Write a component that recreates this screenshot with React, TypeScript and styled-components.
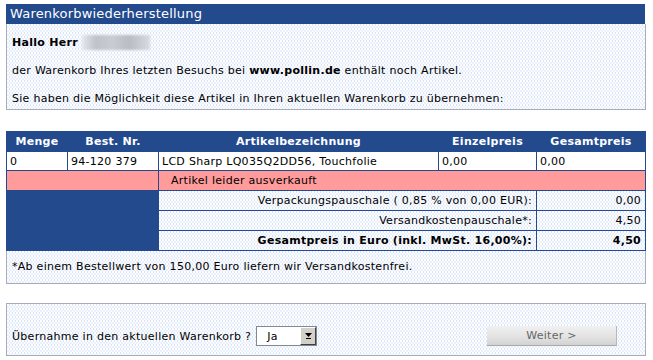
import React from "react";
import styled, { createGlobalStyle, css } from "styled-components";

const GlobalStyle = createGlobalStyle`
  html, body { margin: 0; padding: 0; background: #ffffff; }
  body {
    font-family: "DejaVu Sans", Verdana, sans-serif;
    font-size: 11px;
    letter-spacing: 0.28px;
    color: #000000;
  }
`;

const BLUE = "#224a8d";
const PANEL_BORDER = "#a6adb8";

const dotted = css`
  background-color: #d6e3fa;
  background-image: radial-gradient(circle at 1px 1px, #ffffff 0.7px, transparent 1px),
    radial-gradient(circle at 1px 1px, #ffffff 0.7px, transparent 1px);
  background-size: 3px 4px, 3px 4px;
  background-position: 0 0, 1.5px 2px;
`;

const Page = styled.div`
  width: 640px;
  padding: 4px 0 0 6px;
`;

const TitleBar = styled.div`
  height: 20px;
  line-height: 20px;
  background: ${BLUE};
  color: #ffffff;
  font-size: 13px;
  letter-spacing: 0.2px;
  padding-left: 4px;
  width: 635px;
`;

const InfoPanel = styled.div`
  ${dotted};
  width: 627px;
  border: 1px solid ${PANEL_BORDER};
  border-top: none;
  padding: 11px 6px 3px 5px;
`;

const Para = styled.p<{ $last?: boolean }>`
  margin: 0 0 ${(p) => (p.$last ? 0 : 14)}px 0;
  line-height: 14px;
  white-space: nowrap;
`;

const Greeting = styled(Para)`
  font-weight: bold;
  display: flex;
  align-items: center;
  gap: 4px;
`;

const BlurName = styled.span`
  display: inline-block;
  width: 68px;
  height: 15px;
  background: linear-gradient(90deg, #e4e8ee 0%, #bfc3c9 20%, #c9ccd2 45%, #b8bcc3 70%, #d8dce2 100%);
  filter: blur(1px);
`;

const Strong = styled.b`
  font-weight: bold;
`;

const CartTable = styled.table`
  margin-top: 21px;
  width: 640px;
  table-layout: fixed;
  border-collapse: separate;
  border-spacing: 1px;
  background: ${BLUE};
`;

const HeadCell = styled.th`
  height: 19px;
  padding: 0;
  color: #ffffff;
  font-weight: bold;
  text-align: center;
  white-space: nowrap;
`;

const Cell = styled.td<{ $tone?: "white" | "pink" | "dotted" | "blue"; $align?: "left" | "right"; $bold?: boolean; $indent?: number }>`
  height: ${(p) => (p.$tone === "white" ? 18 : 19)}px;
  padding: 0 ${(p) => (p.$align === "right" ? 4 : 0)}px 0 ${(p) => p.$indent ?? 3}px;
  text-align: ${(p) => p.$align ?? "left"};
  font-weight: ${(p) => (p.$bold ? "bold" : "normal")};
  white-space: nowrap;
  ${(p) =>
    p.$tone === "pink"
      ? css`background: #ff9b9b;`
      : p.$tone === "dotted"
      ? dotted
      : p.$tone === "blue"
      ? css`background: ${BLUE};`
      : css`background: #ffffff;`}
`;

const FootPanel = styled.div`
  ${dotted};
  width: 633px;
  height: 32px;
  line-height: 32px;
  border: 1px solid ${PANEL_BORDER};
  border-top: none;
  padding-left: 5px;
`;

const BottomPanel = styled.div`
  ${dotted};
  margin-top: 19px;
  box-sizing: border-box;
  width: 640px;
  height: 53px;
  border: 1px solid ${PANEL_BORDER};
  padding: 21px 0 8px 5px;
  display: flex;
  align-items: center;
`;

const Label = styled.span`
  white-space: nowrap;
`;

const SelectBox = styled.div`
  margin-left: 5px;
  width: 61px;
  height: 20px;
  background: #ffffff;
  border: 1px solid #7f8a99;
  display: flex;
  align-items: center;
  justify-content: space-between;
  padding-left: 10px;
  box-sizing: border-box;
`;

const SelectArrow = styled.span`
  width: 16px;
  height: 18px;
  background: #d4d0c8;
  border-left: 1px solid #ffffff;
  border-top: 1px solid #ffffff;
  border-right: 1px solid #404040;
  border-bottom: 1px solid #404040;
  box-sizing: border-box;
  display: flex;
  align-items: center;
  justify-content: center;
`;

const NextButton = styled.button`
  margin-left: auto;
  margin-right: 28px;
  width: 130px;
  height: 20px;
  border: none;
  border-right: 1px solid #b8b8b8;
  border-bottom: 1px solid #a8a8a8;
  background: linear-gradient(#f0f0f0, #e2e2e2 60%, #d2d2d2);
  color: #666666;
  font-family: "DejaVu Sans", Verdana, sans-serif;
  font-size: 11px;
  letter-spacing: 0.28px;
  padding: 0;
`;

export default function App() {
  return (
    <>
      <GlobalStyle />
      <Page>
        <TitleBar>Warenkorbwiederherstellung</TitleBar>
        <InfoPanel>
          <Greeting>
            Hallo Herr <BlurName />
          </Greeting>
          <Para>
            der Warenkorb Ihres letzten Besuchs bei <Strong>www.pollin.de</Strong> enthält noch Artikel.
          </Para>
          <Para $last>Sie haben die Möglichkeit diese Artikel in Ihren aktuellen Warenkorb zu übernehmen:</Para>
        </InfoPanel>

        <CartTable>
          <colgroup>
            <col style={{ width: 60 }} />
            <col style={{ width: 90 }} />
            <col style={{ width: 279 }} />
            <col style={{ width: 97 }} />
            <col style={{ width: 108 }} />
          </colgroup>
          <thead>
            <tr>
              <HeadCell>Menge</HeadCell>
              <HeadCell>Best. Nr.</HeadCell>
              <HeadCell>Artikelbezeichnung</HeadCell>
              <HeadCell>Einzelpreis</HeadCell>
              <HeadCell>Gesamtpreis</HeadCell>
            </tr>
          </thead>
          <tbody>
            <tr>
              <Cell $tone="white">0</Cell>
              <Cell $tone="white">94-120 379</Cell>
              <Cell $tone="white">LCD Sharp LQ035Q2DD56, Touchfolie</Cell>
              <Cell $tone="white">0,00</Cell>
              <Cell $tone="white">0,00</Cell>
            </tr>
            <tr>
              <Cell $tone="pink" colSpan={2} />
              <Cell $tone="pink" colSpan={3} $indent={12}>
                Artikel leider ausverkauft
              </Cell>
            </tr>
            <tr>
              <Cell $tone="blue" colSpan={2} rowSpan={3} />
              <Cell $tone="dotted" colSpan={2} $align="right">
                Verpackungspauschale ( 0,85 % von 0,00 EUR):
              </Cell>
              <Cell $tone="dotted" $align="right">0,00</Cell>
            </tr>
            <tr>
              <Cell $tone="dotted" colSpan={2} $align="right">
                Versandkostenpauschale*:
              </Cell>
              <Cell $tone="dotted" $align="right">4,50</Cell>
            </tr>
            <tr>
              <Cell $tone="dotted" colSpan={2} $align="right" $bold>
                Gesamtpreis in Euro (inkl. MwSt. 16,00%):
              </Cell>
              <Cell $tone="dotted" $align="right" $bold>
                4,50
              </Cell>
            </tr>
          </tbody>
        </CartTable>

        <FootPanel>*Ab einem Bestellwert von 150,00 Euro liefern wir Versandkostenfrei.</FootPanel>

        <BottomPanel>
          <Label>Übernahme in den aktuellen Warenkorb ?</Label>
          <SelectBox>
            <span>Ja</span>
            <SelectArrow>
              <svg width="7" height="6" viewBox="0 0 7 6">
                <path d="M0 0h7L3.5 4z" fill="#000" />
                <rect x="1" y="5" width="5" height="1" fill="#000" />
              </svg>
            </SelectArrow>
          </SelectBox>
          <NextButton type="button">Weiter &gt;</NextButton>
        </BottomPanel>
      </Page>
    </>
  );
}
